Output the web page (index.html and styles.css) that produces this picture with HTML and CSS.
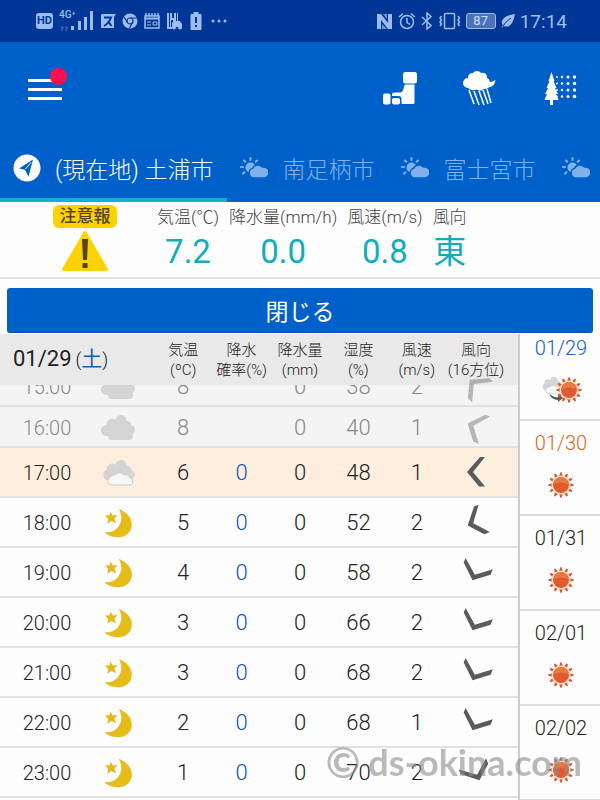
FILE: index.html
```html
<!DOCTYPE html>
<html lang="ja">
<head>
  <meta charset="UTF-8">
  <meta name="viewport" content="width=device-width, initial-scale=1.0">
  <title>土浦市の天気</title>
  <link rel="stylesheet" href="styles.css">
</head>
<body>
  <!-- 共通アイコン -->
  <svg class="defs" width="0" height="0" aria-hidden="true">
    <defs>
      <symbol id="partly" viewBox="0 0 28 22">
        <circle cx="10.500" cy="10.500" r="5" fill="currentColor"/>
        <path d="M10.500 1v2M4 3.500l1.300 1.300M1 10h2M3 16.500l1.500-1.300M17 3.500l-1.300 1.300" stroke="currentColor" stroke-width="2" stroke-linecap="round"/>
        <path d="M13 21a5 5 0 0 1-.5-9.600 6 6 0 0 1 10-1.400 5.500 5.500 0 0 1 2 11z" fill="currentColor" stroke="#0060c9" stroke-width="1.500"/>
      </symbol>
      <symbol id="cloud" viewBox="0 0 36 26">
        <path d="M8 21H6.500a5.500 5.500 0 0 1 0-11 5.500 5.500 0 0 1 9-5 5.500 5.500 0 0 1 11 1 4.500 4.500 0 0 1 5 4 5 5 0 0 1 1 9l.5 3q-1 3-4 3H11q-3 0-3-4z" fill="#d4d4d4"/>
      </symbol>
      <symbol id="cloudy" viewBox="0 0 36 26">
        <path d="M8 20H6.500a5.500 5.500 0 0 1 0-10 5.500 5.500 0 0 1 9-5 5.500 5.500 0 0 1 11 1 4.500 4.500 0 0 1 5 4 5 5 0 0 1 1 9l-2 3H9z" fill="#d4d4d4"/>
        <path d="M11 25a4 4 0 0 1-1-7.500 4.500 4.500 0 0 1 5-2.500 5.500 5.500 0 0 1 9 0 4.500 4.500 0 0 1 6 3 4 4 0 0 1 1 7z" fill="#f7f7f7" stroke="#d0ccc8" stroke-width="1"/>
      </symbol>
      <symbol id="moon" viewBox="0 0 28 30">
        <path d="M15.500 1.500C24 5 28 11 27.500 17.500 27 25 21 29 14.500 29 9 29 4 27.500 1 24.500c5 .5 9-1 12-4 5-5 6-11.500 2.500-19z" fill="#e6bd17" stroke="#d9b52f" stroke-width=".5"/>
        <path d="M6.500 3.500l2.300 4 4.700-.5-3 3.600 1.500 4.700-4.500-2.200-4.200 2.700.9-4.900L1 7.500l4.500-.2z" fill="#e6b91a"/>
      </symbol>
      <symbol id="sun" viewBox="-13 -13 26 26">
        <g fill="#d9552f">
          <path d="M-1.800-9h3.600L.6-12.800h-1.200zM-1.800 9h3.600L.6 12.800h-1.200zM-9-1.800v3.600L-12.800.6v-1.200zM9-1.800v3.600L12.800.6v-1.200z"/>
          <path transform="rotate(30)" d="M-1.800-9h3.600L.6-12.800h-1.200zM-1.800 9h3.600L.6 12.800h-1.200zM-9-1.800v3.600L-12.800.6v-1.200zM9-1.800v3.600L12.800.6v-1.200z"/>
          <path transform="rotate(60)" d="M-1.800-9h3.600L.6-12.800h-1.200zM-1.800 9h3.600L.6 12.800h-1.200zM-9-1.800v3.600L-12.800.6v-1.200zM9-1.800v3.600L12.800.6v-1.200z"/>
        </g>
        <circle r="9.500" fill="#fbe6c8"/>
        <circle r="8" fill="#e05a30"/>
        <path d="M-7-1a7 7 0 0 1 14 0q-7-3-14 0z" fill="#e97a42"/>
      </symbol>
      <symbol id="wind" viewBox="-18 -18 36 36">
        <path d="M4-15h5L-3 0 9 14.500H3L-9 0z" fill="#5b5b5b"/>
      </symbol>
    </defs>
  </svg>

  <div class="status">
    <div class="status-left">
      <span class="hd">HD</span>
      <svg width="35" height="24" viewBox="0 0 35 24" fill="currentColor">
        <text x="0" y="9" class="net">4G⁺</text>
        <path d="M12 17h3v4h-3zM19 12h3v9h-3zM25 8h3v13h-3zM31 2h3v19h-3z"/>
        <path d="M3 17v5M7 17v5M5 19h-2M7 19h2" stroke="currentColor" opacity=".5"/>
      </svg>
      <svg width="16" height="16" viewBox="0 0 16 16">
        <path d="M2 1h14l-2 3v11H1V2z" fill="currentColor"/>
        <path d="M4 4.500h7Q9 10 4 13M8.500 9l3 4" stroke="#003797" stroke-width="2" fill="none"/>
      </svg>
      <svg width="16" height="16" viewBox="0 0 16 16">
        <circle cx="8" cy="8" r="7.500" fill="currentColor"/>
        <circle cx="8" cy="8" r="3" fill="none" stroke="#003797" stroke-width="1.200"/>
        <path d="M8 5h7M5.500 9.500L2 4M10.500 9.500L7.500 15" stroke="#003797" stroke-width="1.200"/>
      </svg>
      <svg width="16" height="16" viewBox="0 0 16 16" fill="none" stroke="currentColor">
        <path d="M1 3h14v12H1z" stroke-width="1.500"/>
        <path d="M2 0v3M5 0v3M8 0v3M11 0v3M14 0v3" stroke-width="1.500"/>
        <path d="M1 5.500h14" stroke-width="2"/>
        <path d="M3 9h4M3 12h4M9 9h4v3H9z"/>
      </svg>
      <svg width="17" height="18" viewBox="0 0 17 18" fill="currentColor">
        <path d="M1 1h2v14H1zM4 1h2v5h2V1h2v9H7V8H5v7H4zM11 1h1v9h-1zM1 15h5v2H1zM6 11l2-2h6l2 3v3H6z"/>
        <circle cx="8" cy="15.500" r="2"/><circle cx="14" cy="15.500" r="2"/>
      </svg>
      <svg width="14" height="18" viewBox="0 0 14 18">
        <path d="M4.500 0h5v2h2q1 0 1 1v14q0 1-1 1h-9q-1 0-1-1V3q0-1 1-1h2z" fill="currentColor"/>
        <path d="M7 5v6M7 13v2" stroke="#003797" stroke-width="2"/>
      </svg>
      <svg width="20" height="4" viewBox="0 0 20 4" fill="currentColor">
        <circle cx="4" cy="2" r="1.500"/><circle cx="10" cy="2" r="1.500"/><circle cx="16" cy="2" r="1.500"/>
      </svg>
    </div>
    <div class="status-right">
      <svg width="17" height="17" viewBox="0 0 17 17">
        <path d="M1 1h4l7 9V1h4v15h-4L5 7v9H1z" fill="currentColor"/>
        <path d="M7 1h4v5zM6 16h5l-5-5z" fill="currentColor" opacity=".7"/>
      </svg>
      <svg width="18" height="18" viewBox="0 0 18 18" fill="none" stroke="currentColor" stroke-width="1.500">
        <circle cx="9" cy="10" r="6.500"/><path d="M9 6v4.500l3 2M1 5l4-3.500M17 5l-4-3.500"/>
      </svg>
      <svg width="12" height="18" viewBox="0 0 12 18" fill="none" stroke="currentColor" stroke-width="1.500">
        <path d="M1 5l9 8.500L6 17V1l4 3.500L1 13"/>
      </svg>
      <svg width="23" height="18" viewBox="0 0 23 18" fill="none" stroke="currentColor" stroke-width="1.500">
        <rect x="6.500" y="1.500" width="10" height="15" rx="1"/>
        <path d="M3.500 4l-1.500 2 1.500 2L2 10l1.500 2L2 14M20 4l1.500 2L20 8l1.500 2-1.500 2 1.500 2"/>
      </svg>
      <span class="battery">87</span>
      <svg width="14" height="14" viewBox="0 0 14 14">
        <path d="M14 0Q6 1 3 4-1 8 2 11l-2 3 3-2q5 2 8-3 2-3 3-9z" fill="currentColor"/>
        <path d="M2 12Q5 7 10 4" stroke="#003797" fill="none"/>
      </svg>
      <span class="clock">17:14</span>
    </div>
  </div>

  <header>
    <div class="toolbar">
      <button class="menu" aria-label="メニュー">
        <span class="bar"></span><span class="bar"></span><span class="bar"></span>
        <span class="dot"></span>
      </button>
      <div class="tools">
        <button aria-label="地図">
          <svg width="36" height="36" viewBox="0 0 36 36" fill="#fff">
            <rect x="21" y="1" width="14" height="11.500" rx="2.500"/>
            <path d="M23 13.500h9.500v18q0 1.500-1.500 1.500H21q-1.500 0-1.500-1.500V28q0-3-3-3H10v-1.500q0-2 2-2h6q2 0 3-2l1-4z"/>
            <rect x="1" y="22.500" width="7.500" height="11" rx="2"/>
            <rect x="10" y="27" width="8" height="6.500" rx="2"/>
          </svg>
        </button>
        <button aria-label="雨雲">
          <svg width="36" height="36" viewBox="0 0 36 36">
            <path d="M6 17a5 5 0 0 1 0-10 4.500 4.500 0 0 1 5-5 5 5 0 0 1 8 0 4.500 4.500 0 0 1 6 5q3 1 2.500 4 3 0 6-2-1 7-7 7.500-2 2-5 1.500-3 3-7 .5-5 2-8.500-1.500z" fill="#fff"/>
            <path d="M7 19l5 14M12 20l5 14M17 20l5 14M21 19l5 14M25 18l4 14" stroke="#fff" stroke-width="1.500"/>
          </svg>
        </button>
        <button aria-label="花粉">
          <svg width="36" height="36" viewBox="0 0 36 36" fill="#fff">
            <path d="M9.500 1l3 9h-1l3 7H13l3 6h-2l2.500 6H11v5H8v-5H2.500L5 23H3l3-6H4.500l3-7h-1z"/>
            <g id="dots">
              <circle cx="15" cy="6" r="1"/><circle cx="20" cy="6" r="1.200"/><circle cx="26" cy="6" r="1.500"/><circle cx="32.500" cy="6" r="1.700"/>
            </g>
            <use href="#dots" y="6.500"/>
            <use href="#dots" y="13"/>
            <use href="#dots" y="19.500"/>
          </svg>
        </button>
      </div>
    </div>
    <nav class="tabs">
      <a href="#" class="tab active">
        <svg width="28" height="28" viewBox="0 0 28 28">
          <circle cx="14" cy="14" r="13.500" fill="#fff"/>
          <path d="M20 5.500L6 14.500l6 1.200 3.500 7z" fill="#0060c9"/>
          <path d="M18 8.500l-5.500 6.500" stroke="#fff"/>
        </svg>
        (現在地) 土浦市
      </a>
      <a href="#" class="tab"><svg width="28" height="22"><use href="#partly"/></svg>南足柄市</a>
      <a href="#" class="tab"><svg width="28" height="22"><use href="#partly"/></svg>富士宮市</a>
      <a href="#" class="tab" aria-label="次の地点"><svg width="28" height="22"><use href="#partly"/></svg></a>
    </nav>
  </header>

  <section class="now">
    <div class="alert">
      <span class="badge">注意報</span>
      <svg width="48" height="42" viewBox="0 0 48 42">
        <path d="M24 2.500L45.500 39.500h-43z" fill="#fdd200" stroke="#fdd200" stroke-width="3" stroke-linejoin="round"/>
        <path d="M21 9h6l-1 21h-4zM21.500 33h5v5h-5z" fill="#54451a"/>
      </svg>
    </div>
    <dl>
      <div><dt>気温(℃)</dt><dd>7.2</dd></div>
      <div><dt>降水量(mm/h)</dt><dd>0.0</dd></div>
      <div><dt>風速(m/s)</dt><dd>0.8</dd></div>
      <div><dt>風向</dt><dd>東</dd></div>
    </dl>
  </section>

  <button class="close">閉じる</button>

  <main>
    <div class="hourly" id="hourly">
      <table>
        <colgroup>
          <col class="c-time"><col class="c-icon"><col><col><col><col><col><col class="c-dir">
        </colgroup>
        <thead>
          <tr>
            <th colspan="2" class="date">01/29<small>(<b>土</b>)</small></th>
            <th>気温<br>(ºC)</th>
            <th>降水<br>確率(%)</th>
            <th>降水量<br>(mm)</th>
            <th>湿度<br>(%)</th>
            <th>風速<br>(m/s)</th>
            <th class="dir">風向<br>(16方位)</th>
          </tr>
        </thead>
        <tbody>
          <tr class="past">
            <td class="time">15:00</td><td><svg width="36" height="26"><use href="#cloud"/></svg></td>
            <td>8</td><td class="prob"></td><td>0</td><td>38</td><td>2</td>
            <td class="dir"><svg width="36" height="36" viewBox="-18 -18 36 36"><use href="#wind" x="-18" y="-18" width="36" height="36" transform="rotate(45)"/></svg></td>
          </tr>
          <tr class="past">
            <td class="time">16:00</td><td><svg width="36" height="26"><use href="#cloud"/></svg></td>
            <td>8</td><td class="prob"></td><td>0</td><td>40</td><td>1</td>
            <td class="dir"><svg width="36" height="36" viewBox="-18 -18 36 36"><use href="#wind" x="-18" y="-18" width="36" height="36" transform="rotate(22.5)"/></svg></td>
          </tr>
          <tr class="current">
            <td class="time">17:00</td><td><svg width="36" height="26"><use href="#cloudy"/></svg></td>
            <td>6</td><td class="prob">0</td><td>0</td><td>48</td><td>1</td>
            <td class="dir"><svg width="36" height="36" viewBox="-18 -18 36 36"><use href="#wind" x="-18" y="-18" width="36" height="36"/></svg></td>
          </tr>
          <tr>
            <td class="time">18:00</td><td><svg width="28" height="30"><use href="#moon"/></svg></td>
            <td>5</td><td class="prob">0</td><td>0</td><td>52</td><td>2</td>
            <td class="dir"><svg width="36" height="36" viewBox="-18 -18 36 36"><use href="#wind" x="-18" y="-18" width="36" height="36" transform="rotate(-22.5)"/></svg></td>
          </tr>
          <tr>
            <td class="time">19:00</td><td><svg width="28" height="30"><use href="#moon"/></svg></td>
            <td>4</td><td class="prob">0</td><td>0</td><td>58</td><td>2</td>
            <td class="dir"><svg width="36" height="36" viewBox="-18 -18 36 36"><use href="#wind" x="-18" y="-18" width="36" height="36" transform="rotate(-67.5)"/></svg></td>
          </tr>
          <tr>
            <td class="time">20:00</td><td><svg width="28" height="30"><use href="#moon"/></svg></td>
            <td>3</td><td class="prob">0</td><td>0</td><td>66</td><td>2</td>
            <td class="dir"><svg width="36" height="36" viewBox="-18 -18 36 36"><use href="#wind" x="-18" y="-18" width="36" height="36" transform="rotate(-67.5)"/></svg></td>
          </tr>
          <tr>
            <td class="time">21:00</td><td><svg width="28" height="30"><use href="#moon"/></svg></td>
            <td>3</td><td class="prob">0</td><td>0</td><td>68</td><td>2</td>
            <td class="dir"><svg width="36" height="36" viewBox="-18 -18 36 36"><use href="#wind" x="-18" y="-18" width="36" height="36" transform="rotate(-67.5)"/></svg></td>
          </tr>
          <tr>
            <td class="time">22:00</td><td><svg width="28" height="30"><use href="#moon"/></svg></td>
            <td>2</td><td class="prob">0</td><td>0</td><td>68</td><td>1</td>
            <td class="dir"><svg width="36" height="36" viewBox="-18 -18 36 36"><use href="#wind" x="-18" y="-18" width="36" height="36" transform="rotate(-67.5)"/></svg></td>
          </tr>
          <tr>
            <td class="time">23:00</td><td><svg width="28" height="30"><use href="#moon"/></svg></td>
            <td>1</td><td class="prob">0</td><td>0</td><td>70</td><td>2</td>
            <td class="dir"><svg width="36" height="36" viewBox="-18 -18 36 36"><use href="#wind" x="-18" y="-18" width="36" height="36" transform="rotate(-112.5)"/></svg></td>
          </tr>
        </tbody>
      </table>
    </div>

    <aside class="days" id="days">
      <a href="#" class="day sat">01/29
        <svg width="42" height="26" viewBox="0 0 42 26">
          <use href="#cloudy" x="0" y="0" width="24" height="17"/>
          <path d="M9 16q4 5 9 4v-3l5 4-5 4v-2q-7 0-9-7z" fill="#5b5b5b"/>
          <use href="#sun" x="16" y="0" width="26" height="26"/>
        </svg>
      </a>
      <a href="#" class="day sun">01/30<svg width="26" height="26"><use href="#sun"/></svg></a>
      <a href="#" class="day">01/31<svg width="26" height="26"><use href="#sun"/></svg></a>
      <a href="#" class="day">02/01<svg width="26" height="26"><use href="#sun"/></svg></a>
      <a href="#" class="day">02/02<svg width="26" height="26"><use href="#sun"/></svg></a>
    </aside>
  </main>

  <div class="credit"><span>©</span>ds-okina.com</div>

  <script>
    // 現在時刻の行が見える位置までスクロール
    document.getElementById("hourly").scrollTop = 19;
    document.getElementById("days").scrollTop = 8;
  </script>
</body>
</html>
```

FILE: styles.css
```css
* {
  box-sizing: border-box;
}
body {
  margin: 0;
  height: 100vh;
  display: flex;
  flex-direction: column;
  overflow: hidden;
  position: relative;
  font-family: Roboto, "Noto Sans CJK JP", sans-serif;
  font-weight: 300;
  color: #222;
  background: #fdfdfd;
}
a {
  color: inherit;
  text-decoration: none;
}
button {
  border: none;
  padding: 0;
  background: none;
  font-family: inherit;
  cursor: pointer;
}
svg {
  display: block;
  flex-shrink: 0;
}
.defs {
  position: absolute;
}

/* status bar */
.status {
  height: 42px;
  flex-shrink: 0;
  display: flex;
  justify-content: space-between;
  align-items: center;
  padding: 0 33px 0 36px;
  background: #003797;
  color: #9dbdf2;
}
.status-left, .status-right {
  display: flex;
  align-items: center;
  gap: 6px;
}
.status-right {
  gap: 5px;
}
.hd {
  padding: 0 1px;
  border-radius: 3px;
  background: #9dbdf2;
  color: #003797;
  font-size: 11px;
  font-weight: 700;
  line-height: 16px;
}
.net {
  font-size: 10px;
  font-weight: 500;
}
.battery {
  width: 30px;
  height: 16px;
  border: 1px solid #9dbdf2;
  border-radius: 3px;
  background: #4a72b9;
  color: #cfe0ff;
  font-size: 13px;
  font-weight: 400;
  line-height: 14px;
  text-align: center;
}
.clock {
  font-size: 19px;
  font-weight: 400;
}

/* header */
header {
  flex-shrink: 0;
  background: #0060c9;
}
.toolbar {
  height: 98px;
  display: flex;
  justify-content: space-between;
  align-items: center;
  padding: 0 22px 4px 28px;
}
.menu {
  position: relative;
  width: 34px;
  display: flex;
  flex-direction: column;
  gap: 6px;
}
.bar {
  height: 3px;
  background: #fff;
}
.dot {
  position: absolute;
  top: -11px;
  right: -5px;
  width: 17px;
  height: 17px;
  border-radius: 50%;
  background: #fc1150;
}
.tools {
  display: flex;
  gap: 44px;
}
.tabs {
  display: flex;
  height: 62px;
  overflow: hidden;
}
.tab {
  display: flex;
  align-items: center;
  gap: 14px;
  flex-shrink: 0;
  padding: 0 14px 3px 13px;
  border-bottom: 4px solid transparent;
  font-size: 23px;
  color: #80b1ec;
  white-space: nowrap;
}
.tab.active {
  border-color: #14b1cb;
  color: #fff;
}

/* current weather */
.now {
  flex-shrink: 0;
  display: flex;
  gap: 40px;
  height: 77px;
  padding: 3px 0 0 53px;
  border-bottom: 2px solid #e4e4e4;
}
.alert {
  display: flex;
  flex-direction: column;
  align-items: center;
  gap: 2px;
}
.badge {
  width: 64px;
  border-radius: 6px;
  background: #fdd200;
  color: #54451a;
  font-size: 17px;
  font-weight: 500;
  line-height: 23px;
  text-align: center;
}
dl {
  display: flex;
  gap: 10px;
  margin: 0;
  text-align: center;
}
dt {
  color: #444;
  font-size: 17px;
  line-height: 24px;
}
dd {
  margin: 0;
  color: #12acbd;
  font-size: 33px;
  font-weight: 400;
  line-height: 45px;
}
.close {
  flex-shrink: 0;
  height: 45px;
  margin: 9px 7px 1px;
  border-radius: 3px;
  border-bottom: 1px solid #0050ae;
  background: #0060c9;
  color: #fff;
  font-size: 23px;
}

/* hourly forecast */
main {
  flex: 1;
  min-height: 0;
  display: flex;
}
.hourly {
  flex: 1;
  overflow-y: auto;
  scrollbar-width: none;
  padding-bottom: 4px;
}
table {
  width: 100%;
  table-layout: fixed;
  border-spacing: 0;
}
.c-time {
  width: 82px;
}
.c-icon, .c-dir {
  width: 72px;
}
th {
  position: sticky;
  top: 0;
  height: 51px;
  padding: 0;
  background: #e9e9e9;
  font-size: 15px;
  font-weight: 300;
  line-height: 20px;
  white-space: nowrap;
}
.date {
  padding-left: 13px;
  font-size: 22px;
  font-weight: 400;
  text-align: left;
}
.date small {
  margin-left: 4px;
  font-size: 18px;
  font-weight: 300;
}
.date b {
  color: #1560bd;
  font-size: 21px;
  font-weight: 400;
}
td {
  height: 50px;
  padding: 2px 0 0;
  border-bottom: 2px solid #e2e2e2;
  font-size: 22px;
  line-height: 24px;
  text-align: center;
}
td svg {
  margin: 0 auto;
}
.time {
  padding-left: 12px;
  font-size: 20px;
}
.dir {
  padding: 0 12px 0 0;
}
.prob {
  color: #0f55b5;
}
.past td {
  height: 41px;
  background: #f4f4f4;
  color: #888;
}
.past .dir svg {
  opacity: .4;
}
.current td {
  background: #feeedd;
}

/* daily list */
.days {
  width: 82px;
  flex-shrink: 0;
  overflow-y: auto;
  scrollbar-width: none;
  border-left: 2px solid #ccc;
}
.day {
  height: 95px;
  display: flex;
  flex-direction: column;
  align-items: center;
  gap: 17px;
  padding: 10px 0 0 2px;
  border-bottom: 2px solid #dcdcdc;
  font-size: 20px;
  line-height: 24px;
}
.day.sat {
  color: #1560bd;
}
.day.sun {
  color: #e0651a;
}

.credit {
  position: absolute;
  right: 18px;
  bottom: 14px;
  display: flex;
  gap: 8px;
  color: rgba(140, 140, 140, .6);
  font-family: Lato, sans-serif;
  font-size: 36px;
  font-weight: 700;
  line-height: 48px;
  pointer-events: none;
}
.credit span {
  font-size: 42px;
}
```
